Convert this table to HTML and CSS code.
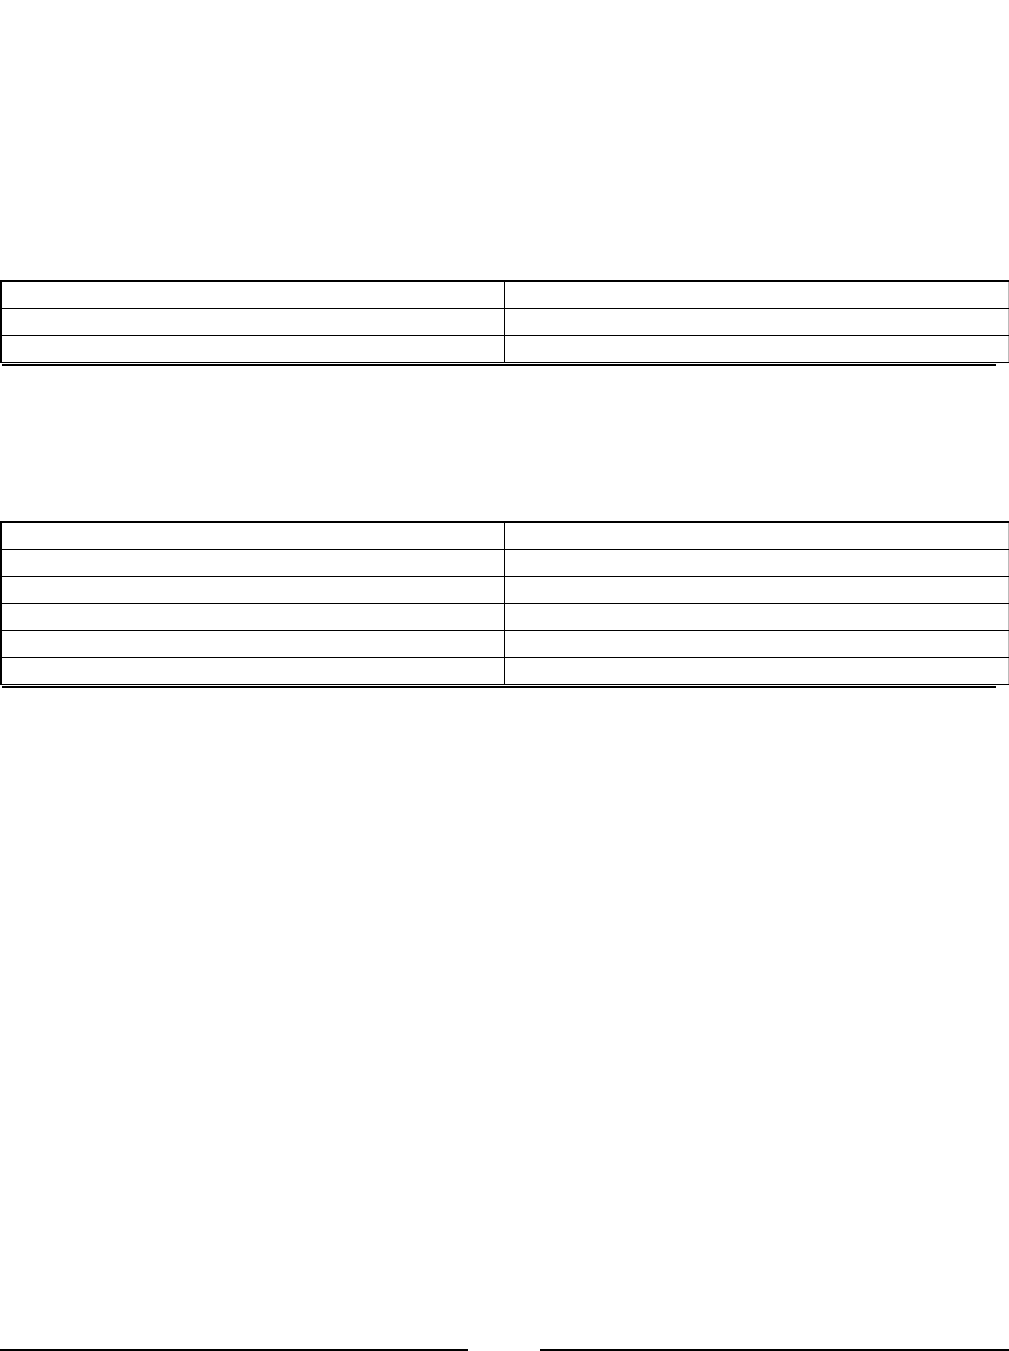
FILE: index.html
```html
<!DOCTYPE html>
<html lang="en">
<head>
<meta charset="utf-8">
<title>Form</title>
<link rel="stylesheet" href="styles.css">
</head>
<body>
<div class="page">
  <section class="block block-first">
    <table class="grid">
      <tr><td></td><td></td></tr>
      <tr><td></td><td></td></tr>
      <tr><td></td><td></td></tr>
    </table>
    <div class="rule"></div>
  </section>
  <section class="block block-second">
    <table class="grid">
      <tr><td></td><td></td></tr>
      <tr><td></td><td></td></tr>
      <tr><td></td><td></td></tr>
      <tr><td></td><td></td></tr>
      <tr><td></td><td></td></tr>
      <tr><td></td><td></td></tr>
    </table>
    <div class="rule"></div>
  </section>
  <footer class="signatures">
    <div class="sign sign-left"></div>
    <div class="sign sign-right"></div>
  </footer>
</div>
</body>
</html>
```
FILE: styles.css
```css
html, body {
  margin: 0;
  padding: 0;
  background: #fff;
  font-family: "Liberation Sans", Arial, sans-serif;
  overflow: hidden;
}
.page {
  width: 1009px;
  height: 1351px;
  display: flex;
  flex-direction: column;
}
.block-first {
  margin-top: 280px;
}
.block-second {
  margin-top: 155px;
}
.grid {
  width: 1009px;
  border-collapse: collapse;
  table-layout: fixed;
  border-top: 2px solid #000;
  border-left: 2px solid #000;
  border-right: 1px solid #bbb;
}
.grid td {
  height: 26px;
  padding: 0;
  border-top: 1px solid #000;
  border-bottom: 1px solid #000;
  border-right: 1px solid #000;
}
.grid td:first-child {
  width: 502px;
}
.grid td:last-child {
  border-right: 1px solid #bbb;
}
.grid tr:first-child td {
  border-top: 2px solid #000;
}
.rule {
  margin: 1px 13px 0 2px;
  border-top: 2px solid #000;
}
.signatures {
  margin-top: auto;
  display: flex;
  justify-content: space-between;
  gap: 72px;
}
.sign {
  height: 0;
  border-top: 2px solid #000;
}
.sign-left {
  width: 468px;
}
.sign-right {
  width: 469px;
}
```
